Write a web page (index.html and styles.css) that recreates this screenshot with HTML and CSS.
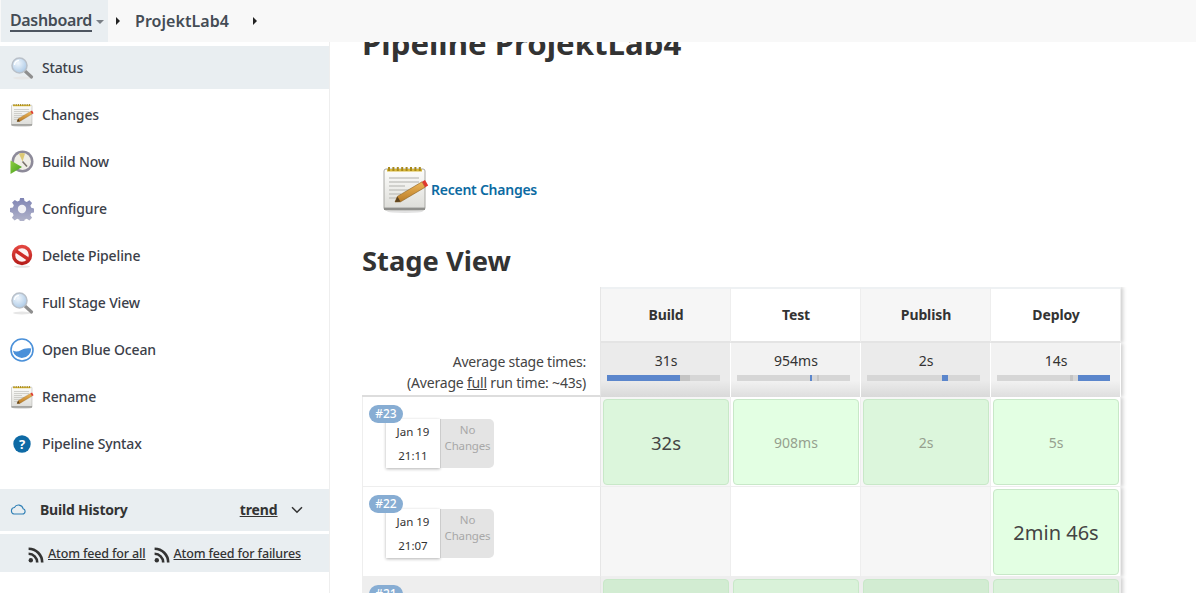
FILE: index.html
```html
<!DOCTYPE html>
<html lang="en">
<head>
<meta charset="utf-8">
<title>ProjektLab4</title>
<link rel="stylesheet" href="styles.css">
</head>
<body>
<svg class="defs" width="0" height="0" aria-hidden="true">
  <defs>
    <radialGradient id="lens" cx="40%" cy="35%" r="70%"><stop offset="0" stop-color="#f0f6fc"/><stop offset="1" stop-color="#a9c8e6"/></radialGradient>
    <linearGradient id="paper" x1="0" y1="0" x2="0" y2="1"><stop offset="0" stop-color="#fdfdfb"/><stop offset="1" stop-color="#dcdcd8"/></linearGradient>
    <linearGradient id="gear" x1="0" y1="0" x2="0" y2="1"><stop offset="0" stop-color="#7f84b4"/><stop offset="1" stop-color="#b4b6cb"/></linearGradient>
    <linearGradient id="play" x1="0" y1="0" x2="1" y2="1"><stop offset="0" stop-color="#8fd03f"/><stop offset="1" stop-color="#3f9a1e"/></linearGradient>
    <linearGradient id="stop" x1="0" y1="0" x2="0" y2="1"><stop offset="0" stop-color="#e2453f"/><stop offset="1" stop-color="#b81f1c"/></linearGradient>
    <linearGradient id="pencil" x1="0" y1="0" x2="0" y2="1"><stop offset="0" stop-color="#efb85a"/><stop offset="1" stop-color="#b87a26"/></linearGradient>
    <symbol id="i-search" viewBox="0 0 24 24">
      <ellipse cx="12" cy="22" rx="9" ry="1.500" fill="#e6e6e6"/>
      <path d="M15.500 15.500l6 5.500" stroke="#8f8f8f" stroke-width="3.200" stroke-linecap="round"/>
      <circle cx="9.500" cy="9.500" r="7.500" fill="url(#lens)" stroke="#b9c0c9" stroke-width="1.500"/>
      <path d="M4.500 9a5 5 0 0 1 4.500-4.600" fill="none" stroke="#fff" stroke-width="1.300"/>
    </symbol>
    <symbol id="i-note" viewBox="0 0 24 24">
      <ellipse cx="12" cy="23.300" rx="9" ry=".7" fill="#e2e2e2"/>
      <rect x="1.500" y="2" width="20.500" height="20.500" rx="1" fill="url(#paper)" stroke="#a8a8a4" stroke-width=".5"/>
      <rect x="1.500" y="21.300" width="20.500" height="1.200" fill="#8f8f8c"/>
      <path d="M3 2.600h17.500" stroke="#d8b83a" stroke-width="1.300"/>
      <path d="M3.500 2h16.500" stroke="#a8891a" stroke-width="2" stroke-dasharray="1 1.200" fill="none"/>
      <path d="M4 6.500h15M4 8.500h15M4 10.500h8M4 12.500h12M4 14.500h6M4 16.500h5" stroke="#c6c6c2" stroke-width=".8"/>
      <path d="M7 18.500l1.200-2.800 12.300-7.300 1.600 2.700-12.300 7.300z" fill="url(#pencil)" stroke="#8a5f1e" stroke-width=".3"/>
      <path d="M7 18.500l1.200-2.800 1.600 2.700z" fill="#5c4320"/>
      <path d="M20.500 8.400l1.500-.9 1.600 2.700-1.500.9z" fill="#e0392e"/>
    </symbol>
    <symbol id="i-rss" viewBox="0 0 16 16">
      <circle cx="2.800" cy="13.200" r="2.200" fill="#333"/>
      <path d="M.6 6.800a8.600 8.600 0 0 1 8.600 8.600M.6 1.800a13.600 13.600 0 0 1 13.600 13.600" fill="none" stroke="#333" stroke-width="2.600"/>
    </symbol>
  </defs>
</svg>

<header class="topbar">
  <div class="crumb crumb-active"><a class="crumb-link" href="#">Dashboard</a><span class="caret"></span></div>
  <span class="arrow arrow-first"></span>
  <a class="crumb-plain" href="#">ProjektLab4</a>
  <span class="arrow arrow-last"></span>
</header>

<div class="page">
  <aside class="sidebar">
    <nav class="tasks">
      <a class="task task-current" href="#"><svg class="task-icon"><use href="#i-search"/></svg>Status</a>
      <a class="task" href="#"><svg class="task-icon"><use href="#i-note"/></svg>Changes</a>
      <a class="task" href="#">
        <svg class="task-icon" viewBox="0 0 24 24">
          <circle cx="12.500" cy="11.500" r="11" fill="#8d8a99"/>
          <circle cx="12.500" cy="11.500" r="8.500" fill="#efeee6"/>
          <path d="M12.500 11.500L9 3.800A8.500 8.500 0 0 1 15 3.400z" fill="#dcc873"/>
          <path d="M12.500 11.500l4.500 5" stroke="#77726a" stroke-width="1.600"/>
          <path d="M.5 10.500L12 17 .5 24z" fill="url(#play)"/>
        </svg>Build Now</a>
      <a class="task" href="#">
        <svg class="task-icon" viewBox="0 0 24 24">
          <path fill="url(#gear)" d="M10 .5h4l.7 3.200 2.300 1 2.800-1.800 2.800 2.800-1.800 2.800 1 2.300 3.200.7v4l-3.200.7-1 2.300 1.800 2.800-2.800 2.800-2.800-1.800-2.300 1-.7 3.200h-4l-.7-3.200-2.300-1-2.800 1.800-2.800-2.800 1.800-2.800-1-2.300L-.8 15v-4l3.200-.7 1-2.300-1.800-2.800 2.800-2.800L7 4.200l2.300-1z" transform="translate(.6 .6) scale(.95)"/>
          <circle cx="12" cy="12" r="4.200" fill="#f1f1f6"/>
        </svg>Configure</a>
      <a class="task" href="#">
        <svg class="task-icon" viewBox="0 0 24 24">
          <ellipse cx="12" cy="22.600" rx="8" ry="1.100" fill="#e4e4e4"/>
          <circle cx="12" cy="11" r="8.500" fill="#fdf3f3" stroke="url(#stop)" stroke-width="3.400"/>
          <path d="M6 7l12 8" stroke="#cf2c28" stroke-width="3.400"/>
        </svg>Delete Pipeline</a>
      <a class="task" href="#"><svg class="task-icon"><use href="#i-search"/></svg>Full Stage View</a>
      <a class="task" href="#">
        <svg class="task-icon" viewBox="0 0 24 24">
          <circle cx="12" cy="12" r="11" fill="#fff" stroke="#4a90d9" stroke-width="1.600"/>
          <path d="M2.800 12.500c3 1.500 5.500 1 8-.3s6-2.500 10.400-1.700A9.300 9.300 0 0 1 2.800 12.500z" fill="#4a90d9"/>
        </svg>Open Blue Ocean</a>
      <a class="task" href="#"><svg class="task-icon"><use href="#i-note"/></svg>Rename</a>
      <a class="task" href="#">
        <svg class="task-icon" viewBox="0 0 24 24">
          <circle cx="12" cy="12" r="8.700" fill="#0e6aa5"/>
          <text class="help-mark" x="12" y="16.500" text-anchor="middle">?</text>
        </svg>Pipeline Syntax</a>
    </nav>

    <section class="history">
      <svg class="cloud" viewBox="0 0 16 12"><path d="M4 11h8.500a2.700 2.700 0 0 0 .6-5.300A4.700 4.700 0 0 0 4.400 4.500 3.300 3.300 0 0 0 4 11z" fill="none" stroke="#2f7fb5" stroke-width="1.100"/></svg>
      <span class="history-title">Build History</span>
      <a class="trend" href="#">trend</a>
      <svg class="chevron" viewBox="0 0 12 8"><path d="M1 1.200l5 5 5-5" fill="none" stroke="#333" stroke-width="1.500"/></svg>
    </section>
    <section class="feeds">
      <svg class="rss"><use href="#i-rss"/></svg><a class="feed" href="#">Atom feed for all</a>
      <svg class="rss rss-second"><use href="#i-rss"/></svg><a class="feed" href="#">Atom feed for failures</a>
    </section>
  </aside>

  <main class="main">
    <h1 class="title">Pipeline ProjektLab4</h1>
    <div class="recent">
      <svg class="recent-icon"><use href="#i-note"/></svg>
      <a class="recent-link" href="#">Recent Changes</a>
    </div>
    <h2 class="stage-title">Stage View</h2>

    <div class="stage-view">
      <div class="corner"></div>
      <div class="stage-head odd">Build</div>
      <div class="stage-head">Test</div>
      <div class="stage-head odd">Publish</div>
      <div class="stage-head">Deploy</div>

      <div class="avg-label">Average stage times:<br>(Average <u>full</u> run time: ~43s)</div>
      <div class="avg odd">31s<div class="bar"><i class="bar-gray" style="left:73px;width:10px"></i><i class="bar-blue" style="left:0;width:73px"></i></div></div>
      <div class="avg">954ms<div class="bar"><i class="bar-gray" style="left:80px;width:2px"></i><i class="bar-blue" style="left:73px;width:2px"></i></div></div>
      <div class="avg odd">2s<div class="bar"><i class="bar-blue" style="left:75px;width:6px"></i></div></div>
      <div class="avg">14s<div class="bar"><i class="bar-gray" style="left:73px;width:3px"></i><i class="bar-blue" style="left:81px;width:32px"></i></div></div>

      <div class="run">
        <span class="badge">#23</span>
        <div class="when"><span>Jan 19</span><span>21:11</span></div>
        <div class="nochange">No Changes</div>
      </div>
      <div class="cell odd"><div class="box big">32s</div></div>
      <div class="cell"><div class="box faint">908ms</div></div>
      <div class="cell odd"><div class="box faint">2s</div></div>
      <div class="cell"><div class="box faint">5s</div></div>

      <div class="run">
        <span class="badge">#22</span>
        <div class="when"><span>Jan 19</span><span>21:07</span></div>
        <div class="nochange">No Changes</div>
      </div>
      <div class="cell odd"></div>
      <div class="cell"></div>
      <div class="cell odd"></div>
      <div class="cell"><div class="box wide">2min 46s</div></div>

      <div class="run run-alt">
        <span class="badge">#21</span>
      </div>
      <div class="cell alt odd"><div class="box"></div></div>
      <div class="cell alt"><div class="box"></div></div>
      <div class="cell alt odd"><div class="box"></div></div>
      <div class="cell alt"><div class="box"></div></div>
    </div>
  </main>
</div>
</body>
</html>
```

FILE: styles.css
```css
* { box-sizing: border-box; }
html, body { margin: 0; height: 593px; overflow: hidden; background: #fff; }
body { font-family: "Noto Sans", "Open Sans", sans-serif; color: #333; font-size: 14px; }
a { color: inherit; text-decoration: none; }
.defs { display: block; height: 0; }

.topbar { height: 42px; background: #f8f8f8; display: flex; align-items: center; }
.crumb { display: flex; align-items: center; height: 42px; }
.crumb-active { width: 107px; margin-left: 1px; padding-left: 9px; background: #e9eef1; }
.crumb-link { font-size: 16px; font-weight: 600; color: #444c55; line-height: 19px; border-bottom: 2px solid #4d5560; letter-spacing: -.35px; white-space: nowrap; }
.caret { width: 0; height: 0; margin-left: 4px; margin-top: 1px; border-left: 4px solid transparent; border-right: 4px solid transparent; border-top: 4px solid #7a7f85; }
.arrow { width: 0; height: 0; border-top: 4px solid transparent; border-bottom: 4px solid transparent; border-left: 4px solid #222; }
.arrow-first { margin-left: 8px; }
.crumb-plain { margin-left: 15px; font-size: 16px; font-weight: 600; color: #444c55; letter-spacing: .05px; }
.arrow-last { margin-left: 24px; }

.page { display: flex; height: 551px; }
.sidebar { width: 330px; flex: none; border-right: 1px solid #eeeeee; padding-top: 4px; }
.tasks { display: flex; flex-direction: column; gap: 4px; }
.task { height: 43px; display: flex; align-items: center; gap: 8px; padding-left: 10px; font-weight: 500; color: #3b4049; letter-spacing: -.15px; }
.task-current { background: #e9eef1; }
.task-icon { width: 24px; height: 24px; flex: none; }
.help-mark { font-size: 13px; font-weight: 700; fill: #fff; font-family: "Noto Sans", sans-serif; }

.history { height: 42px; margin-top: 24px; padding-bottom: 2px; background: #e9eef1; display: flex; align-items: center; padding-left: 10px; }
.cloud { width: 16px; height: 12px; flex: none; }
.history-title { margin-left: 14px; font-weight: 700; color: #333; letter-spacing: -.2px; }
.trend { margin-left: 112px; font-weight: 700; color: #333; text-decoration: underline; letter-spacing: -.1px; }
.chevron { width: 12px; height: 8px; margin-left: 13px; margin-top: 2px; flex: none; }
.feeds { height: 38px; margin-top: 3px; background: #e9eef1; display: flex; align-items: center; padding-left: 28px; font-size: 12.500px; font-weight: 500; }
.rss { width: 16px; height: 16px; flex: none; margin-right: 4px; margin-top: 3px; }
.rss-second { margin-left: 8px; }
.feed { text-decoration: underline; color: #333; letter-spacing: -.15px; white-space: nowrap; }

.main { flex: 1; min-width: 0; padding-left: 32px; overflow: hidden; }
.title { margin: -20px 0 0; font-size: 31.200px; line-height: 42px; font-weight: 700; color: #333; white-space: nowrap; }
.recent { display: flex; align-items: center; margin: 100px 0 0 19px; height: 50px; }
.recent-icon { width: 48px; height: 48px; flex: none; }
.recent-link { margin-left: 2px; font-weight: 600; color: #0b6aa2; letter-spacing: -.25px; }
.stage-title { margin: 28px 0 0; font-size: 27.300px; line-height: 38px; font-weight: 700; color: #333; }

.stage-view { margin-top: 7px; width: 762px; display: grid; grid-template-columns: 239px repeat(4, 130px); grid-template-rows: 56px 54px 90px 90px 90px; }
.stage-view > :nth-child(5n) { box-shadow: 2px 0 4px rgba(0,0,0,.2); clip-path: inset(0 -6px 0 0); }
.corner { background: #fff; border-right: 1px solid #e6e6e6; }
.stage-head { display: flex; align-items: center; justify-content: center; padding: 0 0 2px 1px; background: #fff; font-weight: 700; color: #333; border-top: 2px solid #eef1f3; border-bottom: 2px solid #e4e4e4; border-right: 1px solid #eee; letter-spacing: -.1px; }
.stage-head.odd { background: #f6f6f6; }

.avg-label { text-align: right; padding: 8px 14px 0 0; line-height: 21px; color: #444; border-bottom: 2px solid #ddd; border-right: 1px solid #e6e6e6; letter-spacing: -.2px; }
.avg { background: linear-gradient(#f2f2f2 70%, #dedede); text-align: center; padding: 7px 0 0 1px; line-height: 21px; color: #333; border-right: 1px solid #fff; }
.avg.odd { background: linear-gradient(#ebebeb 70%, #d9d9d9); }
.bar { position: relative; height: 6px; margin: 4px 10px 0 5px; background: #d6d6d6; }
.bar-gray, .bar-blue { position: absolute; top: 0; height: 6px; }
.bar-gray { background: #c4c4c4; }
.bar-blue { background: #5b86cc; }

.run { position: relative; border-left: 1px solid #eee; border-right: 1px solid #e6e6e6; border-bottom: 1px solid #eee; padding: 22px 0 0 23px; display: flex; align-items: flex-start; }
.run-alt { background: #eeeeee; }
.badge { position: absolute; left: 6px; top: 8px; width: 34px; height: 18px; border-radius: 9px; background: #87add3; color: #fff; font-size: 12px; font-weight: 500; line-height: 18px; text-align: center; }
.when { width: 54px; height: 49px; background: #fff; box-shadow: 0 1px 3px rgba(0,0,0,.3); display: flex; flex-direction: column; justify-content: space-between; align-items: center; padding: 4px 0 3px; font-size: 11.500px; line-height: 18px; color: #333; }
.nochange { width: 54px; height: 49px; background: #e4e4e4; border-radius: 0 5px 5px 0; border-left: 1px solid #ccc; color: #a8a8a8; font-size: 11.500px; line-height: 16px; text-align: center; padding: 3px 2px 0; letter-spacing: -.15px; }

.cell { background: #fff; padding: 2px 1px 1px 2px; border-bottom: 1px solid #eee; border-right: 1px solid #eee; }
.cell.odd { background: #f6f6f6; }
.cell.alt { background: #eee; }
.box { height: 100%; display: flex; align-items: center; justify-content: center; border: 1px solid #c8e8c8; border-radius: 4px; background: #e3ffe3; font-size: 14px; color: #444; }
.odd > .box { background: #dcf6dc; }
.alt > .box { background: #d9f2d9; }
.odd.alt > .box { background: #d2ecd2; }
.big { font-size: 18.500px; }
.wide { font-size: 20px; }
.faint { color: #96a08e; }
```
